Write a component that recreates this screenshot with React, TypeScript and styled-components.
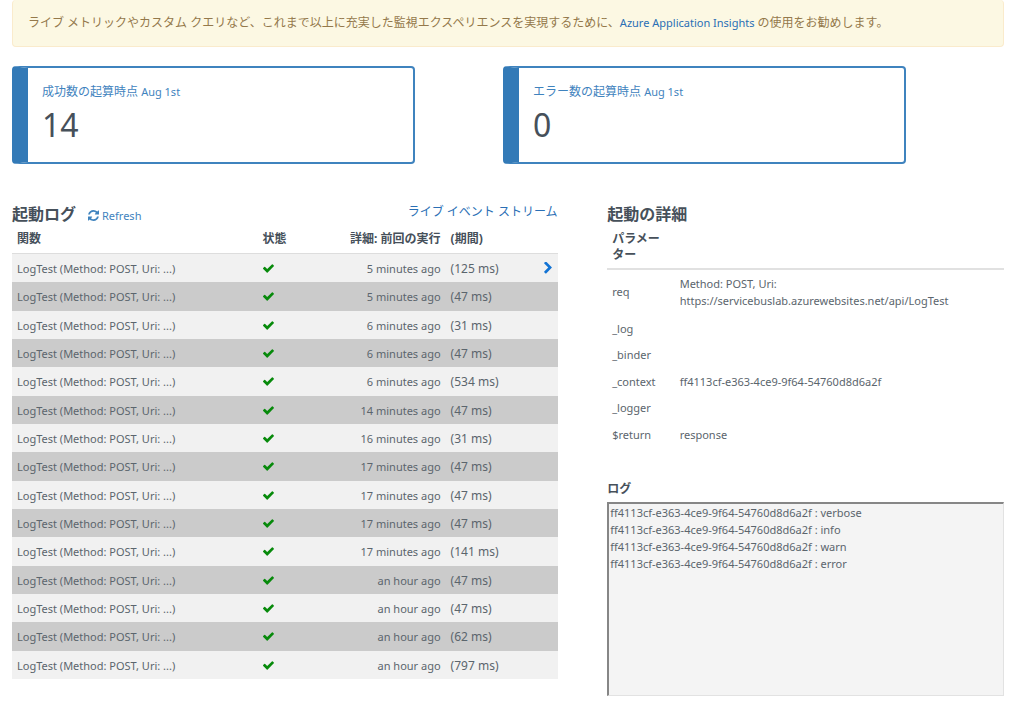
import React from "react";
import styled, { createGlobalStyle } from "styled-components";

const GlobalStyle = createGlobalStyle`
  *, *::before, *::after { box-sizing: border-box; }
  body {
    margin: 0;
    background: #fff;
    color: #5b656d;
    font-family: "Noto Sans", "Noto Sans CJK JP", sans-serif;
    font-size: 12px;
    line-height: 17px;
  }
  a { color: #2a6fb5; text-decoration: none; }
`;

const Page = styled.main`
  padding: 0 20px 22px 12px;
`;

const Notice = styled.div`
  height: 47px;
  padding: 14px 15px;
  border: 1px solid #faebcc;
  border-width: 0 1px 1px;
  border-radius: 4px;
  background: #fcf8e3;
  color: #94794b;
`;

const NoticeLink = styled.a`
  font-size: 11px;
`;

const Cards = styled.section`
  display: grid;
  grid-template-columns: 1fr 1fr;
  margin: 19px 10px 0 0;
`;

const Card = styled.article`
  width: 82%;
  height: 98px;
  padding: 15px 14px;
  border: 2px solid #3f83be;
  border-left: 16px solid #337ab7;
  border-radius: 4px;
`;

const CardLabel = styled.div`
  color: #3f83be;
`;

const Since = styled.time`
  font-size: 11px;
`;

const CardValue = styled.div`
  margin-top: 5px;
  color: #46505a;
  font-size: 32px;
  line-height: 40px;
`;

const Columns = styled.div`
  display: flex;
  justify-content: space-between;
  align-items: flex-start;
  margin-top: 38px;
`;

const Logs = styled.section`
  width: 55%;
`;

const Details = styled.section`
  width: 40%;
`;

const HeadRow = styled.header`
  display: flex;
  align-items: center;
  height: 24px;
`;

const Title = styled.h2`
  margin: 0;
  color: #46505a;
  font-size: 16px;
  line-height: 20px;
`;

const Refresh = styled.button`
  display: flex;
  align-items: center;
  gap: 3px;
  margin: 2px 0 0 12px;
  padding: 0;
  border: 0;
  background: none;
  color: #3f83be;
  font: inherit;
  font-size: 11px;
  cursor: pointer;
`;

const StreamLink = styled.a`
  margin: 0 0 6px auto;
`;

const Glyph = styled.svg<{ $size: number }>`
  display: block;
  width: ${(p) => p.$size}px;
  height: ${(p) => p.$size}px;
  fill: currentColor;
`;

const Table = styled.table`
  width: 100%;
  border-collapse: separate;
  border-spacing: 0;
  table-layout: fixed;

  th, td {
    padding: 0 5px;
    text-align: left;
    vertical-align: middle;
  }
  th {
    color: #46505a;
    line-height: 16px;
  }
  td {
    font-size: 11px;
  }
`;

const LogTable = styled(Table)`
  thead th {
    height: 28px;
    padding-bottom: 2px;
    border-bottom: 1px solid #ddd;
    white-space: nowrap;
  }
`;

const Col = styled.col<{ $width?: string }>`
  width: ${(p) => p.$width ?? "auto"};
`;

const LogRow = styled.tr`
  height: 28px;
  background: #f1f1f1;

  &:nth-child(even) { background: #cbcbcb; }
  &:nth-child(3n + 2) { height: 29px; }
`;

const RightHead = styled.th`
  && { text-align: right; }
`;

const RightCell = styled.td`
  && { text-align: right; }
`;

const Duration = styled.td`
  && { font-size: 12px; }
`;

const Status = styled.td`
  color: #078a0b;
`;

const Arrow = styled.td`
  color: #1273d4;

  && { padding: 0 4px; }
  svg { margin-left: auto; }
`;

const ParamTable = styled(Table)`
  thead th {
    height: 44px;
    border-bottom: 2px solid #e1e1e1;
  }
  td { height: 26px; }
  tr:nth-child(odd) td { height: 27px; }
  tbody tr:first-child td {
    height: 45px;
    padding-bottom: 2px;
  }
`;

const LogTitle = styled.h3`
  margin: 33px 0 5px;
  color: #46505a;
  font-size: 12px;
  line-height: 17px;
`;

const Output = styled.pre`
  height: 194px;
  margin: 0;
  padding: 0 1px;
  overflow: auto;
  border: solid;
  border-width: 2px 1px 1px 2px;
  border-color: #868686 #e2e2e2 #e2e2e2 #868686;
  background: #f4f4f4;
  font: inherit;
  font-size: 11px;
`;

const RefreshIcon = () => (
  <Glyph $size={11} viewBox="128 128 1536 1536" aria-hidden="true">
    <path d="M1639 1056q0 5-1 7-64 268-268 434.5t-478 166.5q-146 0-282.5-55t-243.5-157l-129 129q-19 19-45 19t-45-19-19-45v-448q0-26 19-45t45-19h448q26 0 45 19t19 45-19 45l-137 137q71 66 161 102t187 36q134 0 250-65t186-179q11-17 53-117 8-23 30-23h192q13 0 22.5 9.5t9.5 22.5zm25-800v448q0 26-19 45t-45 19h-448q-26 0-45-19t-19-45 19-45l138-138q-148-137-349-137-134 0-250 65t-186 179q-11 17-53 117-8 23-30 23h-199q-13 0-22.5-9.5t-9.5-22.5v-7q65-268 270-434.5t480-166.5q146 0 284 55.5t245 156.5l130-129q19-19 45-19t45 19 19 45z" />
  </Glyph>
);

const CheckIcon = () => (
  <Glyph $size={11} viewBox="121 160 1550 1550" role="img" aria-label="成功">
    <path d="M1671 566q0 40-28 68l-724 724-136 136q-28 28-68 28t-68-28l-136-136-362-362q-28-28-28-68t28-68l136-136q28-28 68-28t68 28l294 295 656-657q28-28 68-28t68 28l136 136q28 28 28 68z" />
  </Glyph>
);

const ChevronIcon = () => (
  <Glyph $size={12} viewBox="64 96 1600 1600" aria-hidden="true">
    <path d="M1363 877l-742 742q-19 19-45 19t-45-19l-166-166q-19-19-19-45t19-45l531-531-531-531q-19-19-19-45t19-45l166-166q19-19 45-19t45 19l742 742q19 19 19 45t-19 45z" />
  </Glyph>
);

const runs: [string, number][] = [
  ["5 minutes ago", 125],
  ["5 minutes ago", 47],
  ["6 minutes ago", 31],
  ["6 minutes ago", 47],
  ["6 minutes ago", 534],
  ["14 minutes ago", 47],
  ["16 minutes ago", 31],
  ["17 minutes ago", 47],
  ["17 minutes ago", 47],
  ["17 minutes ago", 47],
  ["17 minutes ago", 141],
  ["an hour ago", 47],
  ["an hour ago", 47],
  ["an hour ago", 62],
  ["an hour ago", 797],
];

const invocationId = "ff4113cf-e363-4ce9-9f64-54760d8d6a2f";

const params: [string, string][] = [
  ["req", "Method: POST, Uri: https://servicebuslab.azurewebsites.net/api/LogTest"],
  ["_log", ""],
  ["_binder", ""],
  ["_context", invocationId],
  ["_logger", ""],
  ["$return", "response"],
];

const levels = ["verbose", "info", "warn", "error"];

export default function App() {
  return (
    <Page>
      <GlobalStyle />
      <Notice>
        ライブ メトリックやカスタム クエリなど、これまで以上に充実した監視エクスペリエンスを実現するために、
        <NoticeLink href="#insights">Azure Application Insights</NoticeLink> の使用をお勧めします。
      </Notice>

      <Cards>
        <Card>
          <CardLabel>
            成功数の起算時点 <Since>Aug 1st</Since>
          </CardLabel>
          <CardValue>14</CardValue>
        </Card>
        <Card>
          <CardLabel>
            エラー数の起算時点 <Since>Aug 1st</Since>
          </CardLabel>
          <CardValue>0</CardValue>
        </Card>
      </Cards>

      <Columns>
        <Logs>
          <HeadRow>
            <Title>起動ログ</Title>
            <Refresh type="button">
              <RefreshIcon />
              Refresh
            </Refresh>
            <StreamLink href="#stream">ライブ イベント ストリーム</StreamLink>
          </HeadRow>
          <LogTable>
            <colgroup>
              <Col $width="45%" />
              <Col $width="10%" />
              <Col />
              <Col $width="82px" />
              <Col $width="30px" />
            </colgroup>
            <thead>
              <tr>
                <th>関数</th>
                <th>状態</th>
                <RightHead>詳細: 前回の実行</RightHead>
                <th>(期間)</th>
                <th />
              </tr>
            </thead>
            <tbody>
              {runs.map(([when, ms], i) => (
                <LogRow key={i}>
                  <td>LogTest (Method: POST, Uri: ...)</td>
                  <Status>
                    <CheckIcon />
                  </Status>
                  <RightCell>{when}</RightCell>
                  <Duration>({ms} ms)</Duration>
                  <Arrow>{i === 0 && <ChevronIcon />}</Arrow>
                </LogRow>
              ))}
            </tbody>
          </LogTable>
        </Logs>

        <Details>
          <HeadRow>
            <Title>起動の詳細</Title>
          </HeadRow>
          <ParamTable>
            <colgroup>
              <Col $width="17%" />
              <Col />
            </colgroup>
            <thead>
              <tr>
                <th>パラメーター</th>
                <th />
              </tr>
            </thead>
            <tbody>
              {params.map(([name, value]) => (
                <tr key={name}>
                  <td>{name}</td>
                  <td>{value}</td>
                </tr>
              ))}
            </tbody>
          </ParamTable>
          <LogTitle>ログ</LogTitle>
          <Output>{levels.map((l) => `${invocationId} : ${l}`).join("\n")}</Output>
        </Details>
      </Columns>
    </Page>
  );
}
